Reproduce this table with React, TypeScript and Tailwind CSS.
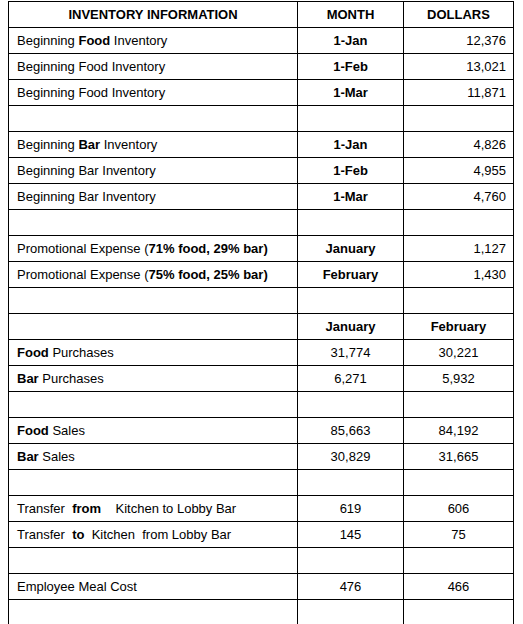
import React from 'react';

type Row = {
  label?: React.ReactNode;
  month?: string;
  amount?: string;
  kind?: 'month' | 'head' | 'value';
};

const B: React.FC<{ children: React.ReactNode }> = ({ children }) => <span className="font-bold">{children}</span>;

const rows: Row[] = [
  { label: <>Beginning <B>Food</B> Inventory</>, month: '1-Jan', amount: '12,376', kind: 'month' },
  { label: 'Beginning Food Inventory', month: '1-Feb', amount: '13,021', kind: 'month' },
  { label: 'Beginning Food Inventory', month: '1-Mar', amount: '11,871', kind: 'month' },
  {},
  { label: <>Beginning <B>Bar</B> Inventory</>, month: '1-Jan', amount: '4,826', kind: 'month' },
  { label: 'Beginning Bar Inventory', month: '1-Feb', amount: '4,955', kind: 'month' },
  { label: 'Beginning Bar Inventory', month: '1-Mar', amount: '4,760', kind: 'month' },
  {},
  { label: <>Promotional Expense (<B>71% food, 29% bar)</B></>, month: 'January', amount: '1,127', kind: 'month' },
  { label: <>Promotional Expense (<B>75% food, 25% bar)</B></>, month: 'February', amount: '1,430', kind: 'month' },
  {},
  { month: 'January', amount: 'February', kind: 'head' },
  { label: <><B>Food</B> Purchases</>, month: '31,774', amount: '30,221', kind: 'value' },
  { label: <><B>Bar</B> Purchases</>, month: '6,271', amount: '5,932', kind: 'value' },
  {},
  { label: <><B>Food</B> Sales</>, month: '85,663', amount: '84,192', kind: 'value' },
  { label: <><B>Bar</B> Sales</>, month: '30,829', amount: '31,665', kind: 'value' },
  {},
  { label: <>Transfer  <B>from</B>    Kitchen to Lobby Bar</>, month: '619', amount: '606', kind: 'value' },
  { label: <>Transfer  <B>to</B>  Kitchen  from Lobby Bar</>, month: '145', amount: '75', kind: 'value' },
  {},
  { label: 'Employee Meal Cost', month: '476', amount: '466', kind: 'value' },
  {},
];

export default function App() {
  return (
    <div className="min-h-screen bg-white pt-px pl-2 text-[13px] text-black" style={{ fontFamily: '"Liberation Sans", Arial, sans-serif' }}>
      <div className="w-[506px] border-x border-t border-black">
        <div className="grid h-[26px] grid-cols-[289px_106px_1fr] border-b border-black font-bold">
          <div className="flex items-center justify-center border-r border-black">INVENTORY INFORMATION</div>
          <div className="flex items-center justify-center border-r border-black">MONTH</div>
          <div className="flex items-center justify-center">DOLLARS</div>
        </div>
        {rows.map((r, i) => (
          <div key={i} className="grid h-[26px] grid-cols-[289px_106px_1fr] border-b border-black">
            <div className="flex items-center whitespace-pre border-r border-black pl-2">{r.label}</div>
            <div className={`flex items-center justify-center border-r border-black ${r.kind === 'value' ? '' : 'font-bold'}`}>
              {r.month}
            </div>
            <div
              className={
                r.kind === 'month'
                  ? 'flex items-center justify-end pr-[7px]'
                  : r.kind === 'head'
                    ? 'flex items-center justify-center font-bold'
                    : 'flex items-center justify-center'
              }
            >
              {r.amount}
            </div>
          </div>
        ))}
      </div>
    </div>
  );
}
